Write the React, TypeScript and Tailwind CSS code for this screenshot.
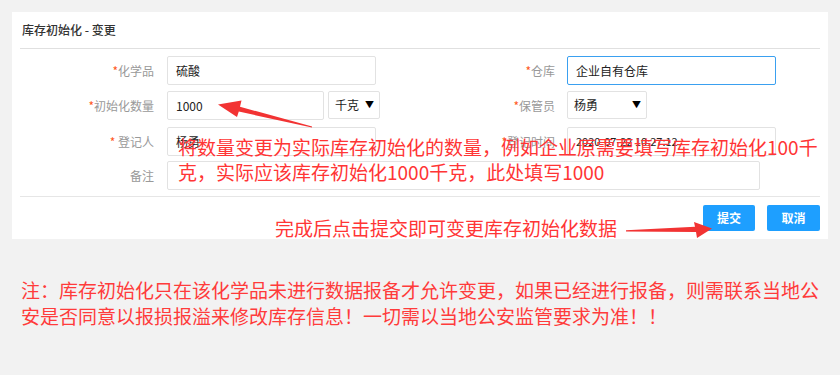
import React from "react";

const Star = () => <span className="text-[#ff5722]">*</span>;

function Label({ text, star = true, w, space = false }: { text: string; star?: boolean; w: string; space?: boolean }) {
  return (
    <div className={`${w} shrink-0 text-right text-[12px] text-[#999] leading-[29px]`}>
      {star && <Star />}
      {space && " "}
      {text}
    </div>
  );
}

function Input({ value, w, active = false, small = false }: { value: string; w: string; active?: boolean; small?: boolean }) {
  return (
    <div
      className={`${w} h-[29px] shrink-0 border ${active ? "border-[#3aa0f0]" : "border-[#e2e2e2]"} bg-white pl-[8px] flex items-center ${small ? "text-[11px]" : "text-[12px]"} text-[#222] rounded-[2px]`}
    >
      {value}
    </div>
  );
}

function Select({ value, w }: { value: string; w: string }) {
  return (
    <div className={`${w} h-[28px] shrink-0 border border-[#e2e2e2] bg-white pl-[6px] pr-[5px] flex items-center justify-between text-[12px] text-[#222] rounded-[2px]`}>
      <span>{value}</span>
      <span className="text-[9px] text-black">▼</span>
    </div>
  );
}

export default function App() {
  return (
    <div
      className="relative w-[840px] h-[375px] overflow-hidden bg-[#f2f2f2]"
      style={{ fontFamily: '"Noto Sans CJK SC", "Liberation Sans", sans-serif' }}
    >
      <div className="pt-[12px] pl-[12px]">
        <div className="w-[816px] h-[227px] bg-white px-[8px] flex flex-col">
          <div className="h-[37px] border-b border-[#e0e0e0] flex items-center pl-[2px] text-[12px] font-medium text-[#333]">
            库存初始化 - 变更
          </div>

          {/* row 1 */}
          <div className="mt-[7px] flex">
            <div className="w-[400px] flex">
              <Label text="化学品" w="w-[134px]" />
              <div className="ml-[13px]"><Input value="硫酸" w="w-[209px]" /></div>
            </div>
            <div className="flex">
              <Label text="仓库" w="w-[135px]" />
              <div className="ml-[12px]"><Input value="企业自有仓库" w="w-[209px]" active /></div>
            </div>
          </div>

          {/* row 2 */}
          <div className="mt-[6px] flex">
            <div className="w-[400px] flex">
              <Label text="初始化数量" w="w-[134px]" />
              <div className="ml-[13px] flex gap-[4px]">
                <Input value="1000" w="w-[157px]" />
                <Select value="千克" w="w-[52px]" />
              </div>
            </div>
            <div className="flex">
              <Label text="保管员" w="w-[135px]" />
              <div className="ml-[12px]"><Select value="杨勇" w="w-[80px]" /></div>
            </div>
          </div>

          {/* row 3 */}
          <div className="mt-[7px] flex">
            <div className="w-[400px] flex">
              <Label text="登记人" w="w-[134px]" space />
              <div className="ml-[13px]"><Input value="杨勇" w="w-[209px]" /></div>
            </div>
            <div className="flex">
              <Label text="登记时间" w="w-[135px]" />
              <div className="ml-[12px]"><Input value="2020-07-22 10:27:12" w="w-[209px]" small /></div>
            </div>
          </div>

          {/* row 4 */}
          <div className="mt-[5px] flex">
            <Label text="备注" star={false} w="w-[134px]" />
            <div className="ml-[13px]"><Input value="" w="w-[593px]" /></div>
          </div>

          <div className="mt-[6px] border-t border-[#e6e6e6]" />

          <div className="mt-[8px] flex justify-end gap-[12px]">
            <button className="w-[52px] h-[26px] rounded-[2px] bg-[#1e9fff] text-white text-[12px] font-bold">提交</button>
            <button className="w-[53px] h-[26px] rounded-[2px] bg-[#1e9fff] text-white text-[12px] font-bold">取消</button>
          </div>
        </div>
      </div>

      <div className="pl-[21px] pt-[38px] text-[19px] leading-[26px] text-[#ff3b3b] whitespace-nowrap">
        <div>注：库存初始化只在该化学品未进行数据报备才允许变更，如果已经进行报备，则需联系当地公</div>
        <div>安是否同意以报损报溢来修改库存信息！一切需以当地公安监管要求为准！！</div>
      </div>

      {/* annotations overlay */}
      <div className="absolute left-[178px] top-[134px] text-[19px] leading-[25px] text-[#ff3535] whitespace-nowrap">
        <div>将数量变更为实际库存初始化的数量，例如企业原需要填写库存初始化100千</div>
        <div>克，实际应该库存初始化1000千克，此处填写1000</div>
      </div>
      <div className="absolute left-[275px] top-[215px] text-[19px] leading-[25px] text-[#ff3535] whitespace-nowrap">
        完成后点击提交即可变更库存初始化数据
      </div>

      <svg className="absolute left-0 top-0" width="840" height="375" viewBox="0 0 840 375">
        <polygon
          points="312.1,126.4 240,106.8 241.5,100.5 218,104.5 237,117 238.8,111.6 311.9,127.6"
          fill="#f23333"
        />
        <polygon
          points="626,230.2 695,226.8 694,222 712,228.5 697,238 696,232 626,231.4"
          fill="#f23333"
        />
      </svg>
    </div>
  );
}
